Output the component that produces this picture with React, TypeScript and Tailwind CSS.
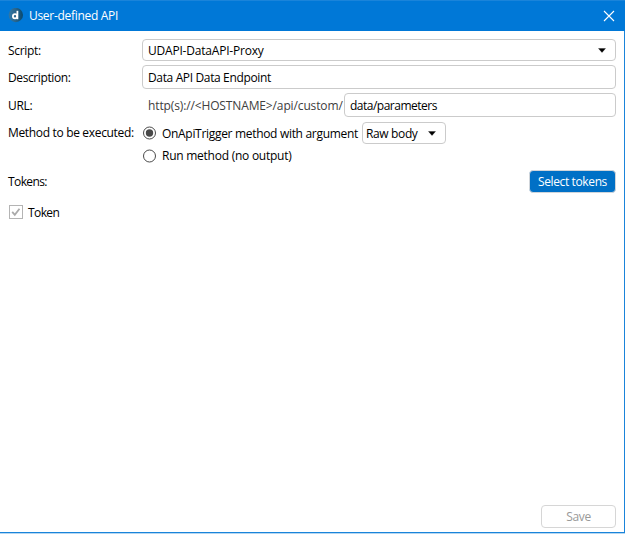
import type { ReactNode } from "react";

const box = "flex items-center rounded-[4px] border border-[#cbcbcb] bg-white";

function Label({ children }: { children: ReactNode }) {
  return <span className="w-[134px] shrink-0">{children}</span>;
}

function Caret() {
  return (
    <svg width="8" height="5" viewBox="0 0 8 5" className="shrink-0">
      <path d="M0.5 0.5H7.5L4 4.5Z" fill="#000" stroke="#000" strokeWidth="0.3" />
    </svg>
  );
}

function Radio({ checked }: { checked?: boolean }) {
  return (
    <svg width="14" height="14" viewBox="0 0 14 14" className="shrink-0">
      <circle cx="7.5" cy="7" r="6" fill="#fff" stroke="#4a4a4a" strokeWidth="1" />
      {checked && <circle cx="7.5" cy="7" r="3.7" fill="#484848" />}
    </svg>
  );
}

export default function App() {
  return (
    <div className="flex h-[534px] w-[625px] flex-col overflow-hidden whitespace-nowrap border-b border-[#b5d7f2] bg-white font-['Open_Sans','Noto_Sans',sans-serif] text-[12px] leading-[16px] tracking-[-0.33px] text-black">
      <header className="flex h-[31px] shrink-0 items-center border-t border-[#1a84da] bg-[#0078d7] pl-[8px] pr-[10px] text-white">
        <svg width="16" height="16" viewBox="0 0 16 16" className="shrink-0">
          <defs>
            <linearGradient id="badge" x1="0" x2="1">
              <stop offset="0" stopColor="#2f78a8" />
              <stop offset="0.5" stopColor="#2a648a" />
              <stop offset="1" stopColor="#07496f" />
            </linearGradient>
          </defs>
          <circle cx="7.8" cy="7" r="7.2" fill="url(#badge)" />
          <circle cx="7" cy="8.2" r="2.1" fill="none" stroke="#fff" strokeWidth="1.8" />
          <path d="M9.4 2.8V11.2" stroke="#fff" strokeWidth="1.8" />
        </svg>
        <span className="ml-[5px] tracking-[-0.3px]">User-defined API</span>
        <svg width="12" height="12" viewBox="0 0 12 12" className="ml-auto">
          <path d="M1 1L11 11M11 1L1 11" stroke="#fff" strokeWidth="1.1" />
        </svg>
      </header>
      <main className="flex grow flex-col border-b border-r border-[#1a84da] pb-[4px] pl-[8px] pr-[8px] pt-[8px]">
        <div className="flex h-[22px] items-center">
          <Label><span className="block pt-[2px]">Script:</span></Label>
          <div className={`${box} h-[22px] grow justify-between pl-[5px] pr-[9px]`}>
            <span className="pt-[2px] tracking-[-0.2px]">UDAPI-DataAPI-Proxy</span>
            <Caret />
          </div>
        </div>
        <div className="mt-[4px] flex h-[24px] items-center">
          <Label><span className="block pt-[2px] tracking-[-0.4px]">Description:</span></Label>
          <div className={`${box} h-[24px] grow pl-[5px]`}>
            <span className="pt-[2px] tracking-[-0.36px]">Data API Data Endpoint</span>
          </div>
        </div>
        <div className="mt-[4px] flex h-[24px] items-center">
          <Label><span className="block pt-[2px]">URL:</span></Label>
          <span className="w-[202px] shrink-0 pl-[6px] pt-[2px] tracking-[-0.13px] text-[#404040]">http(s)://&lt;HOSTNAME&gt;/api/custom/</span>
          <div className={`${box} h-[24px] grow pl-[5px]`}>
            <span className="pt-[2px] tracking-[-0.5px]">data/parameters</span>
          </div>
        </div>
        <div className="mt-[5px] flex h-[22px] items-center">
          <Label>Method to be executed:</Label>
          <Radio checked />
          <span className="ml-[6px] w-[200px] shrink-0 pt-[2px] tracking-[-0.31px]">OnApiTrigger method with argument</span>
          <div className={`${box} h-[22px] w-[84px] justify-between pl-[3px] pr-[9px]`}>
            <span className="pt-[2px] tracking-[-0.36px]">Raw body</span>
            <Caret />
          </div>
        </div>
        <div className="mt-[3px] flex h-[18px] items-center pl-[134px]">
          <Radio />
          <span className="ml-[6px] tracking-[-0.25px]">Run method (no output)</span>
        </div>
        <div className="mt-[5px] flex h-[23px] items-center justify-between">
          <span className="tracking-[-0.6px]">Tokens:</span>
          <button className="flex h-[23px] w-[87px] items-center justify-center rounded-[4px] border border-[#d0d5da] bg-[#0070c6] tracking-[-0.38px] text-white">
            <span>Select tokens</span>
          </button>
        </div>
        <div className="mt-[11px] flex h-[16px] items-center">
          <svg width="16" height="16" viewBox="0 0 16 16">
            <rect x="1.5" y="1.5" width="13" height="13" fill="#fff" stroke="#b4b4b4" />
            <path d="M4.2 7.8L6.8 10.8L11.5 4.7" fill="none" stroke="#aaa" strokeWidth="1.8" />
          </svg>
          <span className="ml-[4px] pt-[2px] tracking-[-0.6px]">Token</span>
        </div>
        <button className={`${box} ml-auto mt-auto h-[23px] w-[75px] justify-center border-[#d6d6d6] text-[#999]`}>
          <span>Save</span>
        </button>
      </main>
    </div>
  );
}
